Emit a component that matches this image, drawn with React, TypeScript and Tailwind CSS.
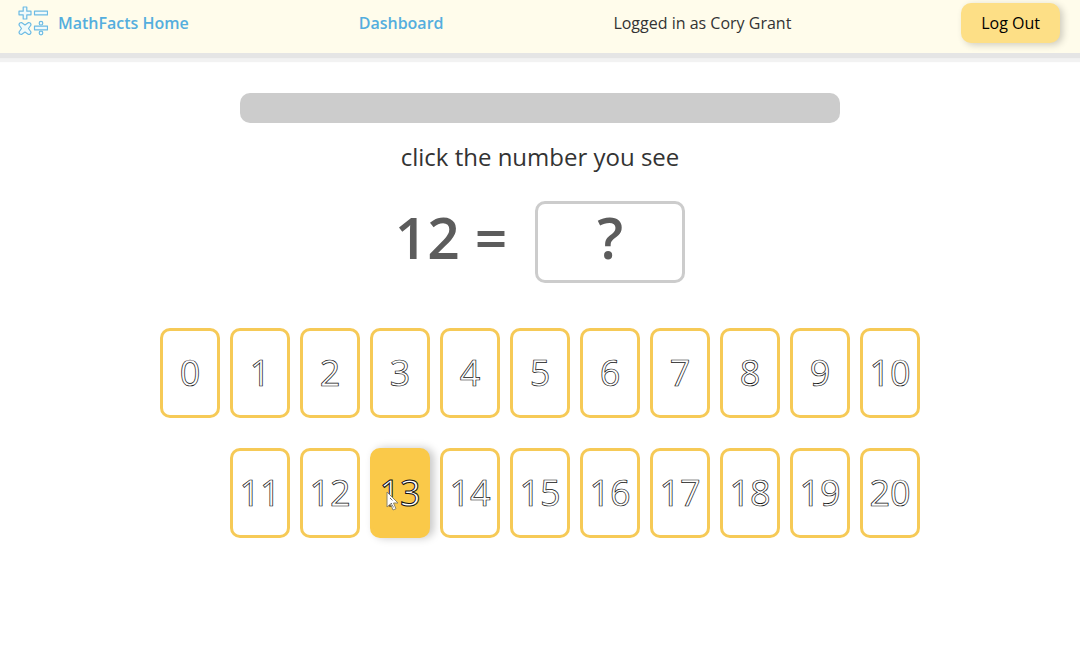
const firstRow = [0, 1, 2, 3, 4, 5, 6, 7, 8, 9, 10];
const secondRow = [11, 12, 13, 14, 15, 16, 17, 18, 19, 20];
const hovered = 13;

function Logo() {
  return (
    <svg
      aria-hidden="true"
      width="30"
      height="30"
      viewBox="0 0 30 30"
      fill="#f0fafa"
      stroke="#6dbbe4"
      strokeWidth="1.2"
      strokeLinejoin="round"
    >
      <path d="M5.200 1h3.600v4.200H13v3.600H8.800V13H5.200V8.800H1V5.200h4.200z" />
      <path d="M16.500 5.200h13v3.600h-13z" />
      <path d="M3.500 16.500l3.500 2.500 3.500-2.500q2.500 0 2.500 2.500l-2.500 3.500L13 26q0 2.500-2.500 2.500L7 26l-3.500 2.500Q1 28.500 1 26l2.500-3.500L1 19q0-2.500 2.500-2.500z" />
      <path d="M16.500 20.200h13v3.600h-13z" />
      <circle cx="23" cy="17.200" r="1.800" />
      <circle cx="23" cy="27" r="1.800" />
    </svg>
  );
}

function Pointer() {
  return (
    <svg
      aria-hidden="true"
      className="pointer-events-none absolute left-3 top-10"
      width="14"
      height="20"
      viewBox="0 0 14 20"
      fill="#fff"
      stroke="#8b8468"
      strokeWidth="1"
      strokeLinejoin="round"
    >
      <path d="M2 1v15l3.500-3 2.500 6 3-1.300-2.500-5.700H13z" />
      <path d="M5 7l3 3M6 12l3 5" stroke="#222" strokeDasharray="1 1" />
    </svg>
  );
}

function NumberCard({ value }: { value: number }) {
  const active = value === hovered;
  return (
    <button
      type="button"
      className={
        active
          ? "relative h-[90px] w-[60px] cursor-pointer rounded-[10px] border-[3px] border-[#fac949] bg-[#fac949] text-4xl text-white shadow-[4px_0px_9px_#00000038] [-webkit-text-stroke:1px_#111]"
          : "h-[90px] w-[60px] cursor-pointer rounded-[10px] border-[3px] border-[#f6ca57] bg-white text-4xl text-white [-webkit-text-stroke:0.7px_#111]"
      }
    >
      {value}
      {active && <Pointer />}
    </button>
  );
}

export default function App() {
  return (
    <div className="min-h-screen bg-white font-['Open_Sans','Noto_Sans',sans-serif] text-[#333]">
      <header className="bg-[#fffceb] shadow-[0_5px_1px_#0000000d,0_9px_1px_#0000000d]">
        <nav className="flex items-start justify-between pt-[3px] pr-5 pb-[10px] pl-[18px]">
          <a href="#" className="flex h-10 items-center gap-[10px] font-semibold text-[#54aede]">
            <span className="-mt-1">
              <Logo />
            </span>
            MathFacts Home
          </a>
          <a href="#" className="flex h-10 items-center font-semibold text-[#54aede]">
            Dashboard
          </a>
          <p className="flex h-10 items-center">Logged in as Cory Grant</p>
          <button
            type="button"
            className="h-10 cursor-pointer rounded-[10px] bg-[#fddf86] px-5 text-black shadow-[3px_2px_7px_#00000030]"
          >
            Log Out
          </button>
        </nav>
      </header>

      <main className="flex flex-col items-center px-4 pt-10">
        <div
          role="progressbar"
          aria-label="Progress"
          aria-valuenow={0}
          className="h-[30px] w-full max-w-[600px] rounded-[10px] bg-[#ccc]"
        />
        <p className="mt-4 text-2xl leading-9">click the number you see</p>
        <div className="mt-[26px] flex gap-7 text-[57px] leading-[72px] font-semibold text-[#5c5c5c]">
          <span>12 =</span>
          <output
            aria-label="Answer"
            className="block h-[82px] w-[150px] rounded-[10px] border-[3px] border-[#ccc] text-center leading-[66px]"
          >
            ?
          </output>
        </div>
        <div className="mt-[45px] flex flex-col items-end gap-[30px]">
          <div className="flex gap-[10px]">
            {firstRow.map((n) => (
              <NumberCard key={n} value={n} />
            ))}
          </div>
          <div className="flex gap-[10px]">
            {secondRow.map((n) => (
              <NumberCard key={n} value={n} />
            ))}
          </div>
        </div>
      </main>
    </div>
  );
}
